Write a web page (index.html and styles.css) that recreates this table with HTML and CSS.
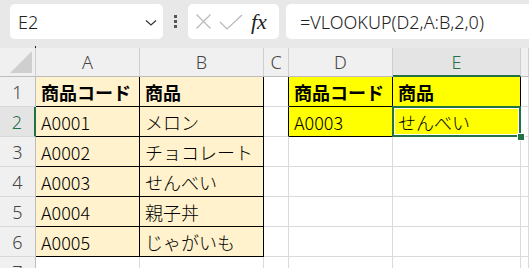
FILE: index.html
```html
<!DOCTYPE html>
<html lang="ja">
<head>
<meta charset="utf-8">
<link rel="stylesheet" href="styles.css">
</head>
<body>
<div class="app">
  <div class="toolbar">
    <div class="namebox">
      <span class="name">E2</span>
      <svg class="chev" width="12" height="8" viewBox="0 0 12 8"><polyline points="1,1.5 6,6 11,1.5" fill="none" stroke="#333" stroke-width="1.2"/></svg>
    </div>
    <div class="dots"><i></i><i></i><i></i></div>
    <div class="fxbox">
      <svg width="17" height="17" viewBox="0 0 17 17"><path d="M1.5 1.5 L15.5 15.5 M15.5 1.5 L1.5 15.5" stroke="#b8b8b8" stroke-width="1.2" fill="none"/></svg>
      <svg width="24" height="18" viewBox="0 0 24 18"><polyline points="1,9 8,16 23,2" stroke="#b8b8b8" stroke-width="1.2" fill="none"/></svg>
      <span class="fx">fx</span>
    </div>
    <div class="formula">=VLOOKUP(D2,A:B,2,0)</div>
  </div>
  <div class="sheet">
    <div class="hd corner"><span class="tri"></span></div>
    <div class="hd col">A</div>
    <div class="hd col">B</div>
    <div class="hd col">C</div>
    <div class="hd col">D</div>
    <div class="hd col sel">E</div>
    <div class="hd col"></div>

    <div class="hd row">1</div>
    <div class="c tan b">商品コード</div>
    <div class="c tan b">商品</div>
    <div class="c rb"></div>
    <div class="c yel b">商品コード</div>
    <div class="c yel b">商品</div>
    <div class="c"></div>

    <div class="hd row sel">2</div>
    <div class="c tan">A0001</div>
    <div class="c tan">メロン</div>
    <div class="c rb"></div>
    <div class="c yel">A0003</div>
    <div class="c yel active">せんべい<span class="handle"></span></div>
    <div class="c"></div>

    <div class="hd row">3</div>
    <div class="c tan">A0002</div>
    <div class="c tan">チョコレート</div>
    <div class="c"></div>
    <div class="c"></div>
    <div class="c"></div>
    <div class="c"></div>

    <div class="hd row">4</div>
    <div class="c tan">A0003</div>
    <div class="c tan">せんべい</div>
    <div class="c"></div>
    <div class="c"></div>
    <div class="c"></div>
    <div class="c"></div>

    <div class="hd row">5</div>
    <div class="c tan">A0004</div>
    <div class="c tan">親子丼</div>
    <div class="c"></div>
    <div class="c"></div>
    <div class="c"></div>
    <div class="c"></div>

    <div class="hd row">6</div>
    <div class="c tan">A0005</div>
    <div class="c tan">じゃがいも</div>
    <div class="c"></div>
    <div class="c"></div>
    <div class="c"></div>
    <div class="c"></div>

    <div class="hd row">7</div>
    <div class="c"></div>
    <div class="c"></div>
    <div class="c"></div>
    <div class="c"></div>
    <div class="c"></div>
    <div class="c"></div>
  </div>
</div>
</body>
</html>
```

FILE: styles.css
```css
* { box-sizing: border-box; }
html, body { margin: 0; padding: 0; }
body {
  width: 529px;
  height: 268px;
  overflow: hidden;
  background: #fff;
  font-family: "Noto Sans CJK JP", "Noto Sans", sans-serif;
  font-size: 18px;
  font-weight: 300;
  color: #000;
}
.app { width: 529px; height: 268px; overflow: hidden; }

.toolbar {
  height: 48px;
  background: #e8e8e8;
  display: flex;
  align-items: flex-start;
  padding: 4px 0 0 10px;
  position: relative;
}
.toolbar::after {
  content: "";
  position: absolute;
  left: 35px;
  bottom: 0;
  width: 1px;
  height: 2px;
  background: #222;
}
.namebox {
  width: 153px;
  height: 35px;
  background: #fff;
  border-radius: 5px;
  display: flex;
  align-items: center;
  justify-content: space-between;
  padding: 0 6px 0 8px;
}
.name {
  font-family: "Noto Sans", sans-serif;
  font-size: 18px;
  color: #222;
}
.chev { margin-top: 2px; }
.dots {
  width: 25px;
  height: 35px;
  display: flex;
  flex-direction: column;
  align-items: center;
  justify-content: center;
  gap: 2px;
}
.dots i {
  display: block;
  width: 3px;
  height: 3px;
  background: #555;
}
.fxbox {
  width: 91px;
  height: 35px;
  background: #fff;
  border-radius: 5px;
  display: flex;
  align-items: center;
  padding-left: 7px;
  gap: 7px;
}
.fx {
  font-family: "Liberation Serif", serif;
  font-style: italic;
  font-weight: normal;
  font-size: 22px;
  color: #222;
  margin-left: 1px;
}
.formula {
  margin-left: 7px;
  flex: 1;
  height: 35px;
  background: #fff;
  border-radius: 5px 0 0 5px;
  display: flex;
  align-items: center;
  padding-left: 14px;
  font-family: "Noto Sans", sans-serif;
  font-size: 18px;
  color: #222;
  white-space: nowrap;
}

.sheet {
  display: grid;
  grid-template-columns: 36px 104px 124px 25px 104px 128px 8px;
  grid-template-rows: 29px repeat(7, 30px);
}
.hd {
  background: #f0f0f0;
  border-right: 1px solid #cfcfcf;
  border-bottom: 1px solid #bdbdbd;
  color: #444;
  font-family: "Noto Sans", sans-serif;
  font-size: 18px;
  display: flex;
  align-items: center;
  justify-content: center;
}
.corner { position: relative; }
.tri {
  position: absolute;
  right: 3px;
  bottom: 3px;
  width: 0;
  height: 0;
  border-left: 22px solid transparent;
  border-bottom: 22px solid #cfcfcf;
}
.row { border-right-color: #bdbdbd; border-bottom-color: #d8d8d8; }
.col.sel {
  background: #e4e4e4;
  color: #217346;
  border-bottom: 2px solid #217346;
}
.row.sel {
  background: #e4e4e4;
  color: #217346;
  border-right: 2px solid #217346;
}

.c {
  border-right: 1px solid #dadada;
  border-bottom: 1px solid #dadada;
  display: flex;
  align-items: center;
  padding-left: 5px;
  white-space: nowrap;
  overflow: visible;
}
.tan {
  background: #fff2cc;
  border-right-color: #000;
  border-bottom-color: #000;
}
.yel {
  background: #ffff00;
  border-right-color: #000;
  border-bottom-color: #000;
}
.rb { border-right-color: #000; }
.b { font-weight: bold; }
.active { position: relative; }
.active::after {
  content: "";
  position: absolute;
  left: -1px;
  top: -1px;
  right: -1px;
  bottom: -1px;
  border: 2px solid #217346;
  box-shadow: inset 0 0 0 1px #fff;
}
.handle {
  position: absolute;
  right: -5px;
  bottom: -5px;
  width: 8px;
  height: 8px;
  background: #217346;
  border: 1px solid #fff;
  z-index: 2;
}
```
